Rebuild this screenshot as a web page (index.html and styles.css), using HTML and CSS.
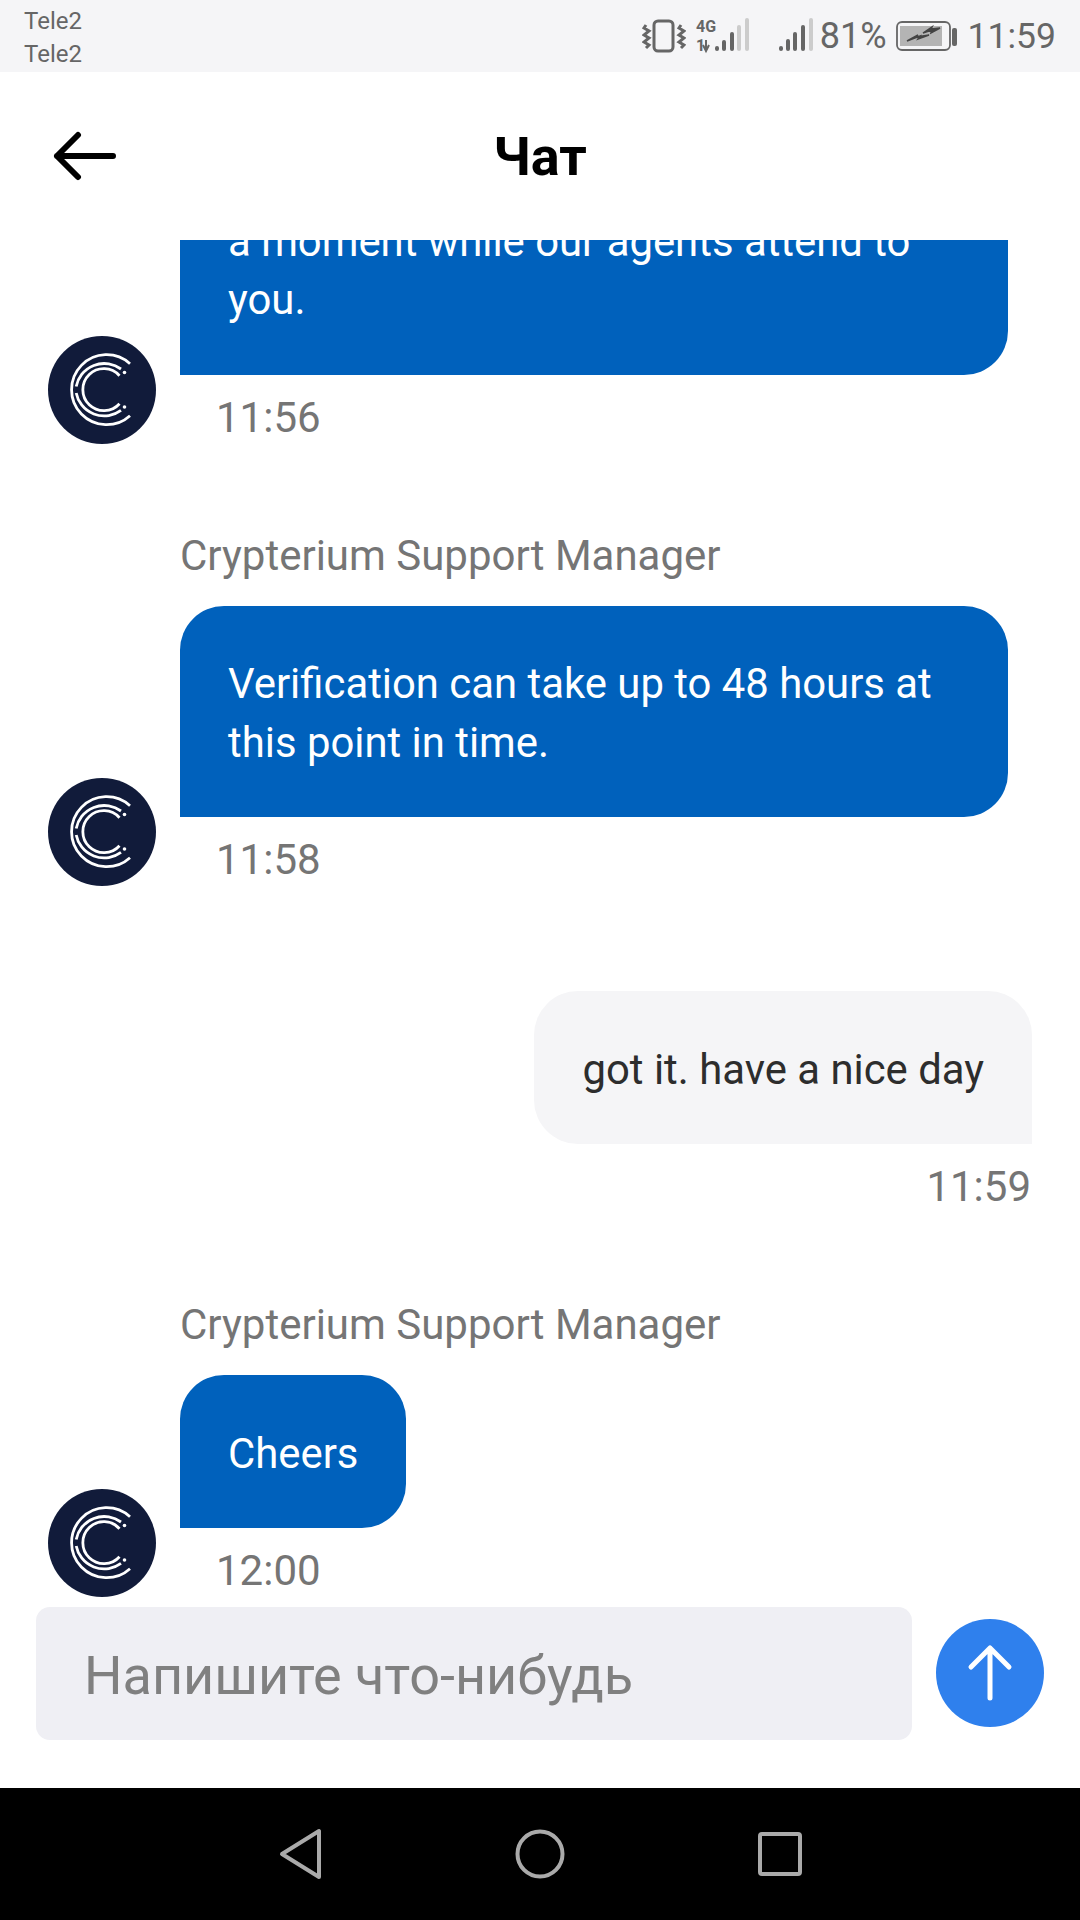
FILE: index.html
```html
<!DOCTYPE html>
<html lang="ru">
<head>
    <meta charset="UTF-8">
    <meta name="viewport" content="width=device-width, initial-scale=1.0">
    <title>Чат</title>
    <link rel="stylesheet" href="styles.css">
</head>
<body>

    <svg class="defs" width="0" height="0">
        <symbol id="logo" viewBox="0 0 108 108">
            <circle cx="54" cy="54" r="54" fill="#111b3a"/>
            <g fill="none" stroke="#fff" stroke-width="2.8">
                <path d="M82 27.7A35 35 0 1 0 82 79.7"/>
                <path d="M73 33A28.5 28.5 0 0 0 28.2 50.5M28.2 56.9A28.5 28.5 0 0 0 73 74.4"/>
                <path d="M71.5 39.7A21 21 0 1 0 71.5 67.7"/>
            </g>
            <circle cx="76.5" cy="36.5" r="1.8" fill="#fff"/>
            <circle cx="76.5" cy="71" r="1.8" fill="#fff"/>
        </symbol>
    </svg>

    <div class="app">

        <div class="statusbar">
            <div class="operadores">
                <div>Tele2</div>
                <div>Tele2</div>
            </div>
            <div class="estado">
                <svg class="ico-vibra" width="44" height="36" viewBox="0 0 44 36">
                    <rect x="12" y="3" width="19" height="30" rx="4" fill="none" stroke="#666" stroke-width="3"/>
                    <path d="M4 7l-2 3 5 3-5 4 5 3-5 4 5 3-3 3M39 7l-2 3 5 3-5 4 5 3-5 4 5 3-3 3" fill="none" stroke="#666" stroke-width="3"/>
                </svg>
                <svg class="ico-red" width="56" height="38" viewBox="0 0 56 38">
                    <text x="1" y="15" class="red-txt">4G</text>
                    <text x="1" y="34" class="red-txt">1</text>
                    <path d="M11 23v11M8 28l3 6 3-6" fill="none" stroke="#666" stroke-width="2"/>
                    <rect x="20" y="29" width="4" height="5" rx="2" fill="#666"/>
                    <rect x="27" y="23" width="4" height="11" rx="2" fill="#666"/>
                    <rect x="35" y="15" width="4" height="19" rx="2" fill="#666"/>
                    <rect x="42" y="8" width="4" height="26" rx="2" fill="#ccc"/>
                    <rect x="50" y="1" width="4" height="33" rx="2" fill="#ccc"/>
                </svg>
                <svg class="ico-senal" width="36" height="36" viewBox="0 0 36 36">
                    <rect x="1" y="28" width="4" height="5" rx="2" fill="#666"/>
                    <rect x="8" y="21" width="4" height="12" rx="2" fill="#666"/>
                    <rect x="15" y="14" width="4" height="19" rx="2" fill="#666"/>
                    <rect x="23" y="7" width="4" height="26" rx="2" fill="#666"/>
                    <rect x="31" y="0" width="4" height="33" rx="2" fill="#ccc"/>
                </svg>
                <span class="porcentaje">81%</span>
                <svg class="ico-bateria" width="62" height="36" viewBox="0 0 62 36">
                    <rect x="1" y="4" width="53" height="28" rx="5" fill="none" stroke="#666" stroke-width="1.8"/>
                    <rect x="4" y="8" width="42" height="20" fill="#b4b4b4"/>
                    <path d="M11 23L24 18 22 21 33 17 20 19 22 17ZM27 15L36 12 35 15 44 10 35 11 36 9Z" fill="#444" stroke="#444" stroke-width="1.500"/>
                    <rect x="56" y="10" width="5" height="18" rx="2" fill="#666"/>
                </svg>
                <span class="hora">11:59</span>
            </div>
        </div>

        <div class="cabecera">
            <svg class="volver" width="66" height="50" viewBox="0 0 66 50">
                <path d="M4 25H60M4 25L25 4M4 25L25 46" fill="none" stroke="#000" stroke-width="6" stroke-linecap="round" stroke-linejoin="round"/>
            </svg>
            <h1>Чат</h1>
        </div>

        <div class="chat">

            <div class="fila">
                <svg class="avatar" width="108" height="108"><use href="#logo"/></svg>
                <div class="mensaje">
                    <div class="burbuja">a moment while our agents attend to you.</div>
                    <div class="tiempo">11:56</div>
                </div>
            </div>

            <div class="fila">
                <svg class="avatar" width="108" height="108"><use href="#logo"/></svg>
                <div class="mensaje">
                    <div class="nombre">Crypterium Support Manager</div>
                    <div class="burbuja">Verification can take up to 48 hours at this point in time.</div>
                    <div class="tiempo">11:58</div>
                </div>
            </div>

            <div class="fila enviado">
                <div class="mensaje">
                    <div class="burbuja">got it. have a nice day</div>
                    <div class="tiempo">11:59</div>
                </div>
            </div>

            <div class="fila">
                <svg class="avatar" width="108" height="108"><use href="#logo"/></svg>
                <div class="mensaje">
                    <div class="nombre">Crypterium Support Manager</div>
                    <div class="burbuja">Cheers</div>
                    <div class="tiempo">12:00</div>
                </div>
            </div>

        </div>

        <div class="zonaEscribir">
            <div class="campo">Напишите что-нибудь</div>
            <div class="enviar">
                <svg width="54" height="62" viewBox="0 0 54 62">
                    <path d="M27 56V6M27 6L8 25M27 6L46 25" fill="none" stroke="#fff" stroke-width="5" stroke-linecap="round" stroke-linejoin="round"/>
                </svg>
            </div>
        </div>

        <div class="navegacion">
            <svg width="44" height="54" viewBox="0 0 44 54">
                <path d="M41 4V50L4 27Z" fill="none" stroke="#aaa" stroke-width="4" stroke-linejoin="round"/>
            </svg>
            <svg width="50" height="50" viewBox="0 0 50 50">
                <circle cx="25" cy="25" r="22.500" fill="none" stroke="#aaa" stroke-width="4"/>
            </svg>
            <svg width="44" height="44" viewBox="0 0 44 44">
                <rect x="2" y="2" width="40" height="40" rx="2" fill="none" stroke="#aaa" stroke-width="4"/>
            </svg>
        </div>

    </div>

</body>
</html>
```

FILE: styles.css
```css
*{
    box-sizing: border-box;
}

html, body{
    margin: 0;
    padding: 0;
}

body{
    font-family: Roboto, "Liberation Sans", sans-serif;
    background-color: white;
}

.defs{
    display: block;
    height: 0;
}

.app{
    width: 1080px;
    height: 1920px;
    display: flex;
    flex-direction: column;
    overflow: hidden;
}

.statusbar{
    height: 72px;
    flex: none;
    display: flex;
    justify-content: space-between;
    align-items: center;
    padding: 0 24px 0 24px;
    background-color: #f5f5f7;
    color: #666;
}

.operadores{
    font-size: 24px;
    line-height: 33px;
    padding-top: 4px;
}

.estado{
    display: flex;
    align-items: center;
}

.ico-vibra{
    margin-right: 9px;
}

.ico-red{
    margin-right: 27px;
}

.ico-senal{
    margin-right: 6px;
}

.ico-bateria{
    margin-left: 9px;
    margin-right: 10px;
}

.red-txt{
    font-family: Roboto, sans-serif;
    font-size: 16px;
    font-weight: 700;
    fill: #666;
}

.porcentaje{
    font-size: 36px;
}

.hora{
    font-size: 35.5px;
}

.cabecera{
    height: 168px;
    flex: none;
    position: relative;
    display: flex;
    align-items: center;
    justify-content: center;
    background-color: white;
}

.cabecera h1{
    margin: 0;
    font-size: 54px;
    font-weight: 700;
    color: black;
}

.volver{
    position: absolute;
    left: 53px;
    top: 59px;
}

.chat{
    flex: 1;
    min-height: 0;
    overflow: hidden;
    display: flex;
    flex-direction: column;
    justify-content: flex-end;
    padding-bottom: 10px;
}

.fila{
    flex: none;
    display: flex;
    align-items: flex-end;
    gap: 24px;
    padding-left: 48px;
    margin-top: 85px;
}

.fila.enviado{
    justify-content: flex-end;
    padding-right: 48px;
    margin-top: 105px;
}

.avatar{
    flex: none;
}

.mensaje{
    display: flex;
    flex-direction: column;
    align-items: flex-start;
    max-width: 828px;
}

.nombre{
    font-size: 42px;
    line-height: 51px;
    padding: 1px 0 25px;
    color: #757575;
}

.burbuja{
    padding: 49.5px 48px 45px;
    font-size: 41.85px;
    line-height: 58.5px;
    color: white;
    background-color: #0061bc;
    border-radius: 44px 44px 44px 0;
}

.tiempo{
    height: 69px;
    padding-left: 36px;
    font-size: 42px;
    line-height: 86px;
    color: #757575;
}

.enviado .mensaje{
    align-items: flex-end;
}

.enviado .burbuja{
    color: #2d2d2d;
    background-color: #f5f5f7;
    border-radius: 44px 44px 0 44px;
}

.enviado .tiempo{
    padding-left: 0;
    padding-right: 1px;
}

.zonaEscribir{
    flex: none;
    display: flex;
    align-items: center;
    gap: 24px;
    padding: 0 36px 48px;
}

.campo{
    flex: 1;
    height: 133px;
    display: flex;
    align-items: center;
    padding: 4px 0 0 48px;
    border-radius: 14px;
    font-size: 54px;
    color: #808080;
    background-color: #efeff4;
}

.enviar{
    width: 108px;
    height: 108px;
    flex: none;
    display: flex;
    align-items: center;
    justify-content: center;
    margin-bottom: 2px;
    border-radius: 50%;
    background-color: #2f80ed;
}

.navegacion{
    height: 132px;
    flex: none;
    display: flex;
    align-items: center;
    justify-content: center;
    gap: 193px;
    background-color: black;
}
```
